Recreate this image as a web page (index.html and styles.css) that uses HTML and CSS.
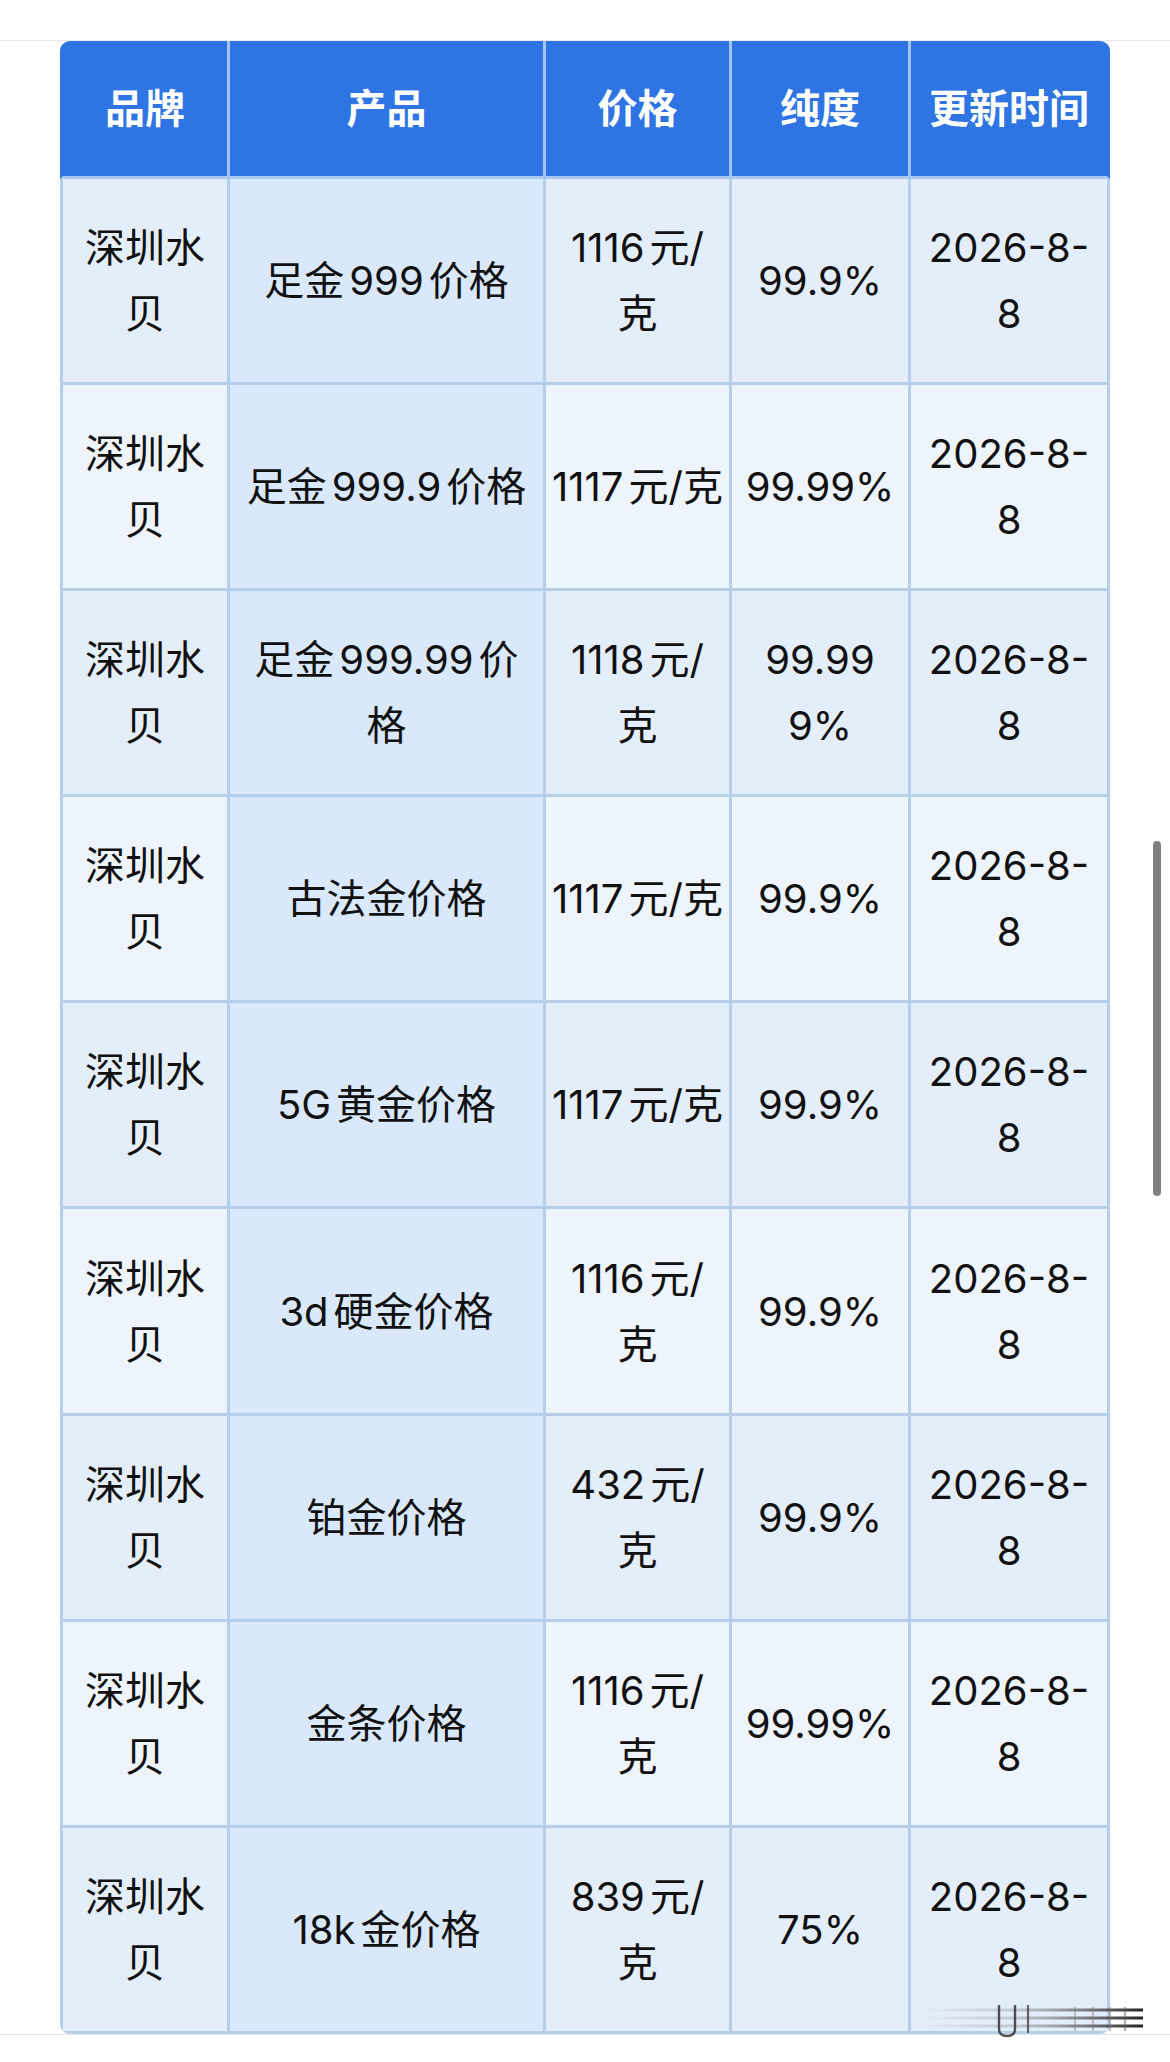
FILE: index.html
```html
<!DOCTYPE html>
<html lang="zh-CN">
<head>
<meta charset="utf-8">
<title>深圳水贝金价</title>
<link rel="stylesheet" href="styles.css">
</head>
<body>
<div class="page">
  <div class="frame">
    <div class="table-wrap">
      <table class="price">
        <colgroup>
          <col class="c-brand">
          <col class="c-product">
          <col class="c-price">
          <col class="c-purity">
          <col class="c-time">
        </colgroup>
        <thead>
          <tr><th>品牌</th><th>产品</th><th>价格</th><th>纯度</th><th>更新时间</th></tr>
        </thead>
        <tbody>
          <tr class="odd"><td>深圳水<br>贝</td><td>足金999价格</td><td>1116元/<br>克</td><td>99.9%</td><td>2026-8-<br>8</td></tr>
          <tr class="even"><td>深圳水<br>贝</td><td>足金999.9价格</td><td>1117元/克</td><td>99.99%</td><td>2026-8-<br>8</td></tr>
          <tr class="odd"><td>深圳水<br>贝</td><td>足金999.99价<br>格</td><td>1118元/<br>克</td><td>99.99<br>9%</td><td>2026-8-<br>8</td></tr>
          <tr class="even"><td>深圳水<br>贝</td><td>古法金价格</td><td>1117元/克</td><td>99.9%</td><td>2026-8-<br>8</td></tr>
          <tr class="odd"><td>深圳水<br>贝</td><td>5G黄金价格</td><td>1117元/克</td><td>99.9%</td><td>2026-8-<br>8</td></tr>
          <tr class="even"><td>深圳水<br>贝</td><td>3d硬金价格</td><td>1116元/<br>克</td><td>99.9%</td><td>2026-8-<br>8</td></tr>
          <tr class="odd"><td>深圳水<br>贝</td><td>铂金价格</td><td>432元/<br>克</td><td>99.9%</td><td>2026-8-<br>8</td></tr>
          <tr class="even"><td>深圳水<br>贝</td><td>金条价格</td><td>1116元/<br>克</td><td>99.99%</td><td>2026-8-<br>8</td></tr>
          <tr class="odd"><td>深圳水<br>贝</td><td>18k金价格</td><td>839元/<br>克</td><td>75%</td><td>2026-8-<br>8</td></tr>
        </tbody>
      </table>
    </div>
  </div>
  <div class="scrollbar"></div>
  <svg class="watermark" width="235" height="50" viewBox="0 0 235 50" aria-hidden="true">
    <defs>
      <linearGradient id="fade" gradientUnits="userSpaceOnUse" x1="0" y1="0" x2="228" y2="0">
        <stop offset="0" stop-color="#9a9a9a" stop-opacity="0"/>
        <stop offset="0.45" stop-color="#8a8a8a" stop-opacity="0.4"/>
        <stop offset="1" stop-color="#222" stop-opacity="1"/>
      </linearGradient>
      <filter id="soft"><feGaussianBlur stdDeviation="0.6"/></filter>
    </defs>
    <g filter="url(#soft)">
      <line x1="0" y1="15" x2="228" y2="15" stroke="url(#fade)" stroke-width="3"/>
      <line x1="0" y1="23" x2="228" y2="23" stroke="url(#fade)" stroke-width="3"/>
      <line x1="0" y1="31" x2="228" y2="31" stroke="url(#fade)" stroke-width="3"/>
      <path d="M84 10 V34 Q84 41 92 41 Q100 41 100 34 V10" fill="none" stroke="#333" stroke-opacity="0.85" stroke-width="2.4"/>
      <line x1="113" y1="10" x2="113" y2="38" stroke="#444" stroke-opacity="0.8" stroke-width="2.2"/>
      <line x1="160" y1="12" x2="160" y2="36" stroke="#777" stroke-opacity="0.4" stroke-width="2.2"/>
      <line x1="178" y1="12" x2="178" y2="36" stroke="#777" stroke-opacity="0.4" stroke-width="2.2"/>
      <line x1="195" y1="12" x2="195" y2="36" stroke="#777" stroke-opacity="0.45" stroke-width="2.2"/>
      <line x1="210" y1="12" x2="210" y2="36" stroke="#666" stroke-opacity="0.5" stroke-width="2.2"/>
    </g>
  </svg>
</div>
</body>
</html>
```
FILE: styles.css
```css
html, body {
  margin: 0;
  padding: 0;
  background: #ffffff;
}

body {
  font-family: "Inter", "Noto Sans CJK SC", "Noto Sans", sans-serif;
  color: #111111;
}

.page {
  position: relative;
  width: 1170px;
  height: 2062px;
  overflow: hidden;
}

.frame {
  margin-top: 40px;
  border-top: 1px solid #ebebeb;
  border-bottom: 1px solid #e6e6e6;
}

.table-wrap {
  margin: 0 60px;
  border-radius: 10px;
  overflow: hidden;
}

.price {
  width: 1050px;
  table-layout: fixed;
  border-collapse: separate;
  border-spacing: 0;
  font-size: 40px;
  line-height: 66px;
  text-align: center;
  text-autospace: normal;
}

.c-brand { width: 170px; }
.c-product { width: 316px; }
.c-price { width: 186px; }
.c-purity { width: 179px; }
.c-time { width: 199px; }

.price th {
  background: #2e74e3;
  color: #ffffff;
  font-weight: 700;
  padding: 34.5px 0 34px;
  border-right: 3px solid #a3c4f0;
  border-bottom: 3px solid #a9c9f2;
  white-space: nowrap;
}

.price th:first-child {
  border-left: 3px solid #2e74e3;
}

.price th:last-child {
  border-right: 3px solid #2e74e3;
}

.price td {
  padding: 36.2px 0 35px;
  vertical-align: middle;
  white-space: nowrap;
  border-right: 3px solid #b5cfea;
  border-bottom: 3px solid #b5cfea;
}

.price td:first-child {
  border-left: 3px solid #b5cfea;
}

.odd td { background: #e4eefa; }
.even td { background: #edf4fc; }
.price td:nth-child(2) { background: #d9e9fb; }

.scrollbar {
  position: absolute;
  left: 1153px;
  top: 841px;
  width: 8px;
  height: 355px;
  border-radius: 4px;
  background: #808080;
}

.watermark {
  position: absolute;
  left: 915px;
  top: 1995px;
}
```
